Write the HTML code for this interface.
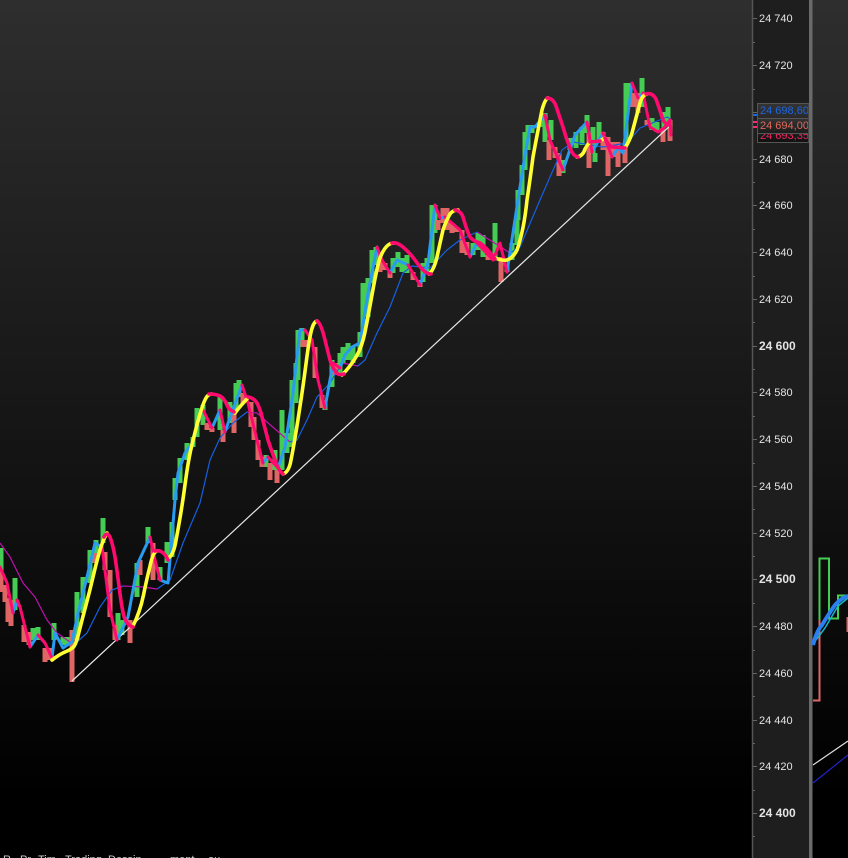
<!DOCTYPE html>
<html><head><meta charset="utf-8"><style>
html,body{margin:0;padding:0;background:#000}
#c{position:relative;width:848px;height:858px;overflow:hidden;background:linear-gradient(#2e2e2e 0,#000 800px)}
svg{position:absolute;left:0;top:0}
#p{position:absolute;left:753px;top:0;width:56px;height:858px;background:#1e1e1e}
.l{position:absolute;left:759px;font:11px/14px "Liberation Sans",sans-serif;color:#e4e4e4;white-space:pre}
.b{font-weight:bold;font-size:12px}
.t{position:absolute;left:757px;width:48px;padding-left:2px;border:1px solid #555;border-right-color:#444;font:11px/14px "Liberation Sans",sans-serif;white-space:pre;overflow:hidden;box-sizing:content-box}
.f{position:absolute;top:853px;font:11px/14px "Liberation Sans",sans-serif;color:#ccc;white-space:pre}
</style></head><body><div id="c">
<div id="p"></div>
<svg width="848" height="858" viewBox="0 0 848 858" fill="none">
<path stroke="#44cc55" stroke-width="5" d="M1 548V570M15 578V610M33 628V640M38 627V640M54 623V640M63 637V645M68 637V645M77 592V640M83 577V613M90 550V583M96 540V560M103 518V543M118 613V640M122 620V635M137 563V597M148 527V543M160 567V580M167 542V563M172 522V557M175 478V500M180 458V483M187 443V460M193 437V447M197 408V437M203 405V425M220 397V430M230 402V423M236 383V410M239 380V397M266 455V467M275 450V470M282 410V470M287 433V453M292 380V447M296 363V403M298 330V380M302 328V340M325 400V410M332 360V387M340 353V373M343 347V363M348 343V360M353 347V363M360 332V357M363 283V333M368 278V317M372 250V283M376 247V265M393 258V273M398 252V267M402 258V272M407 255V273M423 263V282M427 258V272M432 205V263M435 205V233M473 243V255M478 233V250M483 235V257M495 223V260M512 243V260M517 218V245M518 190V220M522 165V195M525 132V170M528 125V150M532 125V133M542 113V127M545 113V142M551 120V140M563 160V173M570 138V150M576 132V148M582 127V145M587 115V133M593 127V153M595 153V162M599 122V140M626 83V143M630 83V103M642 78V107M652 118V130M657 122V132M664 112V128M668 107V123"/>
<path stroke="#e06666" stroke-width="5" d="M1 570V592M5 585V602M8 598V622M11 600V626M24 625V642M29 632V645M45 648V662M50 648V660M72 630V682M95 553V563M105 552V570M110 570V617M115 625V640M130 620V643M140 560V575M153 543V580M207 423V430M212 428V432M223 430V442M234 412V433M243 393V403M251 402V427M254 417V440M258 440V460M262 457V467M270 463V480M277 470V483M303 340V347M308 340V347M315 347V378M322 395V408M335 363V375M380 253V272M385 263V270M390 270V278M413 272V280M420 280V287M438 220V230M443 208V223M447 208V230M452 223V233M457 227V232M462 230V253M467 242V255M488 255V260M501 257V282M507 265V272M549 140V160M555 147V158M559 153V176M589 133V168M603 132V150M608 137V176M613 142V157M618 142V167M625 143V163M633 93V107M638 93V113M647 120V125M663 128V142M670 120V141"/>
<path stroke="#e8e8e8" stroke-width="1.2" d="M72 681L672 124"/>
<g stroke-width="1.2" stroke-linejoin="round">
<path stroke="#c010b0" d="M0 543L10 557L23 583L35 597L47 620L57 633L70 642M123 586L143 587L157 589M247 412L257 413L267 422L290 442M342 363L358 366M477 232L493 242L510 253"/>
<path stroke="#1560e0" d="M70 642L77 642L87 633L100 607L112 590L123 586M157 589L170 580L183 543L200 503L210 460L220 438L233 423L247 412M290 442L297 440L307 420L317 397L330 383L342 363M358 366L365 360L377 333L390 307L403 273L412 266L430 268L447 250L460 240L477 232M510 253L520 247L540 200L550 177L562 150L573 142L603 147L627 143L640 128L667 117L672 120"/>
</g>
<g stroke-width="3" stroke-linejoin="round" stroke-linecap="round">
<path stroke="#2a9cf0" d="M13 613L17 600L20 607M30 647L38 635L45 643M52 658L55 633L63 648L72 642L78 613L87 577L95 543L102 547M117 640L128 617L138 563L150 537M160 580L168 583L175 500L178 473L185 453L193 442L202 408M212 428L220 410M225 432L232 412L242 385M263 463L268 457M278 468L285 447L293 393L300 330L305 330M325 408L333 363M340 368L345 355L352 347L360 343L368 293L377 247M390 273L397 260L408 265M420 285L428 263L435 205M440 218L445 217M470 257L477 243M507 272L518 200L525 155L530 127L535 127L545 115M563 170L575 135L587 122M592 152L603 133M612 157L618 148L623 153L632 83M638 98L643 93"/>
<path stroke="#ff0a6e" d="M0 567L7 583L13 613M17 600L20 607L30 647M38 635L45 643L52 658M102 547L110 610L117 640M150 537L155 560L160 580M202 408L212 428M220 410L225 432M242 385L248 403L257 440L263 463M268 457L278 468M305 330L312 340L318 380L325 408M333 363L340 368M377 247L382 260L390 273M408 265L420 285M435 205L440 218M445 217L460 230L470 257M477 243L493 260L500 243L507 272M545 115L550 140L563 170M587 122L592 152M603 133L612 157M632 83L638 98M643 93L650 127L658 132L664 128L670 120L671 135"/>
</g>
<g stroke-width="3.6" stroke-linejoin="round" stroke-linecap="round">
<path stroke="#ffff33" d="M52 660Q60 654 65 652Q70 650 73 647.5Q76 645 79 632Q82 620 86 605Q90 590 93.5 575Q97 560 100 550Q103 540 107 533M133 626Q140 612 143.5 595Q147 578 150 566Q153 552 157 551M168 558Q173 556 175.5 543Q178 530 180.5 515Q183 500 185.5 481Q188 463 190.5 451Q193 440 198 421Q203 403 206 398Q208 394 212 394M235 413Q241 405 247 399M283 474Q289 472 291 460Q293 450 295.5 435Q298 420 300.5 403Q303 387 306.5 360Q310 333 312.5 327Q314 322 317 321M342 375Q350 367 356 357Q362 347 365 332Q368 317 372.5 292Q377 267 380 258Q383 250 387 246Q390 243 394 243M429 274Q434 270 437 257Q440 243 443 230Q446 221 450 214Q453 210 458 210M495 258Q503 261 507 260Q513 258 517 250Q524 230 527 200Q530 180 533 157Q537 135 542 110Q545 99 548 98M577 157Q583 156 585 149Q587 145 590 142M600 141Q603 139 605 138M625 148Q630 140 632 133Q636 118 640 103Q642 95 647 94"/>
<path stroke="#ff0a6e" d="M104 537Q107 531 110 537Q113 545 115 557Q117 570 119.5 590Q122 610 124.5 618Q127 625 133 627M155 551Q163 549 168 560M209 394Q216 394 220 396Q224 398 227 405Q229 410 234 412M248 397Q255 398 258 405Q261 412 262 417Q266 432 268 440Q272 452 275 460Q278 470 283 474M317 321Q321 323 325 340Q328 352 330 360Q333 370 338 374Q340 375 344 374M392 243Q397 242 403 247Q410 253 415 260Q420 267 423 270Q427 274 431 274M455 210Q461 211 463 217Q467 231 470 237Q473 241 480 243Q487 248 495 259M547 98Q553 98 556 106Q559 115 563 127Q566 138 570 148Q573 156 578 157M590 142L600 141M605 138Q608 145 612 147L625 148M646 94Q652 92 656 99Q660 110 663 120Q666 125 670 125"/>
</g>
<path stroke="#555" stroke-width="1.5" d="M752.5 0V858"/>
<path stroke="#666" d="M753 18.5H757M753 65.5H757M753 112.5H757M753 159.5H757M753 205.5H757M753 252.5H757M753 299.5H757M753 346.5H757M753 392.5H757M753 439.5H757M753 486.5H757M753 533.5H757M753 579.5H757M753 626.5H757M753 673.5H757M753 720.5H757M753 766.5H757M753 813.5H757M753 42.5H755M753 89.5H755M753 182.5H755M753 229.5H755M753 276.5H755M753 322.5H755M753 369.5H755M753 416.5H755M753 463.5H755M753 509.5H755M753 556.5H755M753 603.5H755M753 650.5H755M753 696.5H755M753 743.5H755M753 790.5H755M753 836.5H755"/>
<rect x="809" y="0" width="3.5" height="858" fill="#6a6a6a"/>
<rect x="812.5" y="0" width="36" height="858" fill="url(#g)"/>
<defs><linearGradient id="g" gradientUnits="userSpaceOnUse" x1="0" y1="0" x2="0" y2="800"><stop offset="0" stop-color="#2e2e2e"/><stop offset="1" stop-color="#000"/></linearGradient></defs>
<path stroke="#44cc55" stroke-width="2" d="M819.5 620V558.5H829V618.5H838V595.5H849"/>
<path stroke="#e06666" stroke-width="2" d="M819.5 620V700.5H813M847.5 617V632"/>
<path stroke="#16b8c8" stroke-width="1.5" d="M816 640L825 628L838 606L848 598"/>
<path stroke="#2a80f0" stroke-width="4" d="M813 645Q817 630 822 625Q830 612 835 605Q841 598 848 596"/>
<path stroke="#e0e0e0" stroke-width="1.2" d="M813 765L848 741"/>
<path stroke="#2222cc" stroke-width="1.2" d="M813 783L848 755"/>
<path stroke="#1e66e0" stroke-width="2" d="M753 115H757"/>
<path stroke="#ff2a70" stroke-width="2" d="M753 122H757M753 127H757"/>
</svg>
<div class="l" style="top:12px">24 740</div>
<div class="l" style="top:59px">24 720</div>
<div class="l" style="top:153px">24 680</div>
<div class="l" style="top:199px">24 660</div>
<div class="l" style="top:246px">24 640</div>
<div class="l" style="top:293px">24 620</div>
<div class="l b" style="top:339px">24 600</div>
<div class="l" style="top:386px">24 580</div>
<div class="l" style="top:433px">24 560</div>
<div class="l" style="top:480px">24 540</div>
<div class="l" style="top:527px">24 520</div>
<div class="l b" style="top:572px">24 500</div>
<div class="l" style="top:620px">24 480</div>
<div class="l" style="top:667px">24 460</div>
<div class="l" style="top:714px">24 440</div>
<div class="l" style="top:760px">24 420</div>
<div class="l b" style="top:806px">24 400</div>
<div class="t" style="top:103px;height:14px;background:linear-gradient(#333,#2a2a2a);color:#1e66e0">24 698,60</div>
<div class="t" style="top:128px;height:13px;background:linear-gradient(#222,#111);color:#f0245e;line-height:14px">24 693,35</div>
<div class="t" style="top:118px;height:14px;background:linear-gradient(#333,#1c1c1c);color:#e06a5a;line-height:15px">24 694,00</div>
<span class="f" style="left:3px">R.</span><span class="f" style="left:20px">Pr.</span><span class="f" style="left:38px">Tim</span><span class="f" style="left:65px">Trading</span><span class="f" style="left:108px">Dessin</span><span class="f" style="left:135px;visibility:hidden">é</span><span class="f" style="left:170px">ment</span><span class="f" style="left:208px">ou</span>
</div></body></html>
